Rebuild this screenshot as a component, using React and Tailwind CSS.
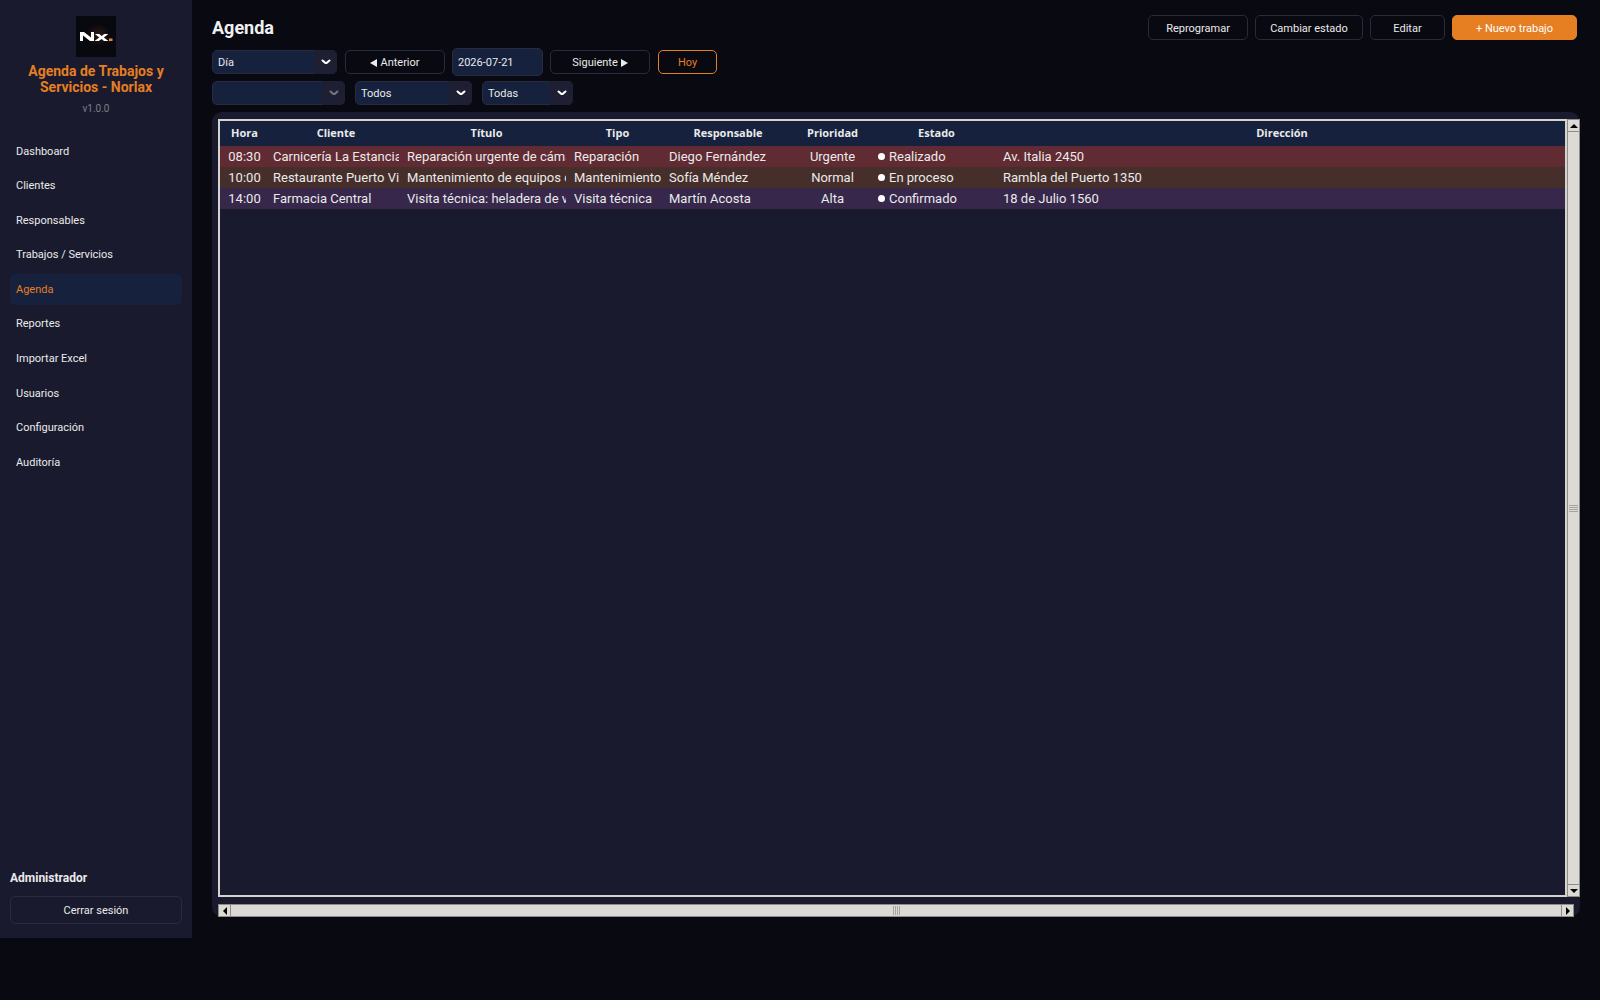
import React, { useState } from "react";

const menuItems = [
  "Dashboard",
  "Clientes",
  "Responsables",
  "Trabajos / Servicios",
  "Agenda",
  "Reportes",
  "Importar Excel",
  "Usuarios",
  "Configuración",
  "Auditoría",
];

const trabajos = [
  {
    hora: "08:30",
    cliente: "Carnicería La Estancia",
    titulo: "Reparación urgente de cámara",
    tipo: "Reparación",
    responsable: "Diego Fernández",
    prioridad: "Urgente",
    estado: "Realizado",
    direccion: "Av. Italia 2450",
    color: "bg-[#612b33]",
  },
  {
    hora: "10:00",
    cliente: "Restaurante Puerto Viejo",
    titulo: "Mantenimiento de equipos de cocina",
    tipo: "Mantenimiento",
    responsable: "Sofía Méndez",
    prioridad: "Normal",
    estado: "En proceso",
    direccion: "Rambla del Puerto 1350",
    color: "bg-[#462f2b]",
  },
  {
    hora: "14:00",
    cliente: "Farmacia Central",
    titulo: "Visita técnica: heladera de vacunas",
    tipo: "Visita técnica",
    responsable: "Martín Acosta",
    prioridad: "Alta",
    estado: "Confirmado",
    direccion: "18 de Julio 1560",
    color: "bg-[#36274b]",
  },
];

function Logo() {
  return (
    <div className="w-10 h-[41px] bg-[#08080f]">
      <svg width="40" height="41" viewBox="0 0 40 41">
        <defs>
          <radialGradient id="glow">
            <stop offset="0" stopColor="#2c1b14" />
            <stop offset="1" stopColor="#08080f" />
          </radialGradient>
        </defs>
        <ellipse cx="22" cy="19" rx="13" ry="11" fill="url(#glow)" />
        <path d="M4 25V16h4l7 5.500V16h3v9h-4l-7-5.500V25z" fill="#fff" />
        <path d="M19 18h4.300l2.400 2.100L28.200 18h4.100l-4.400 3.500L32.500 25h-4.500l-2.500-2.100L22.800 25h-4.300l4.800-3.500z" fill="#fff" />
        <path d="M33 22.500h3.500V25H33z" fill="#f08a24" />
      </svg>
    </div>
  );
}

function Combo({ label, options, width, disabled }) {
  return (
    <div className={`relative h-6 ${width}`}>
      <select
        aria-label={label}
        disabled={disabled}
        className="appearance-none block w-full h-full pt-[2px] pl-[5px] pr-7 rounded-[5px] border border-[#2a2a3e] bg-[#16213e] text-[11px] leading-4 text-[#eaeaea] outline-none"
      >
        {options.map((o) => (
          <option key={o}>{o}</option>
        ))}
      </select>
      <span
        className={`absolute right-0 top-0 h-full w-[23px] rounded-r-[5px] bg-[#1f1f33] flex items-center justify-center pointer-events-none ${
          disabled ? "text-[#777782]" : "text-white"
        }`}
      >
        <svg width="10" height="6" viewBox="0 0 10 6" fill="none">
          <path d="M1.500 1.500L4 3.600Q5 4.300 6 3.600L8.500 1.500" stroke="currentColor" strokeWidth="2" strokeLinecap="round" />
        </svg>
      </span>
    </div>
  );
}

function Button({ children, className }) {
  return (
    <button
      type="button"
      className={`flex items-center justify-center gap-[3px] pt-[2px] rounded-[5px] border text-[11px] leading-4 cursor-pointer ${className}`}
    >
      {children}
    </button>
  );
}

function ScrollArrow({ label, points, className }) {
  return (
    <button
      type="button"
      aria-label={label}
      className={`flex items-center justify-center shrink-0 bg-[#dcdad5] border-[#8f8d88] ${className}`}
    >
      <svg width="8" height="8" viewBox="0 0 8 8">
        <polygon points={points} fill="#000" />
      </svg>
    </button>
  );
}

function Sidebar({ active, setActive }) {
  return (
    <aside className="w-48 shrink-0 bg-[#1a1a2e] flex flex-col items-stretch px-[10px] pt-4 pb-[14px]">
      <div className="flex flex-col items-center">
        <Logo />
        <h2 className="mt-[6px] text-[14px] leading-4 font-bold text-center text-[#e67e22]">
          Agenda de Trabajos y
          <br />
          Servicios - Norlax
        </h2>
        <p className="mt-[6px] text-[10px] leading-4 text-[#7d7d88]">v1.0.0</p>
      </div>
      <nav className="mt-[19px] h-[342px] flex flex-col justify-between">
        {menuItems.map((item) => (
          <a
            key={item}
            href="#"
            onClick={(e) => {
              e.preventDefault();
              setActive(item);
            }}
            className={`flex items-center h-[31px] pt-px px-[6px] rounded-[5px] text-[11px] ${
              item === active ? "bg-[#16213e] text-[#e67e22]" : "text-[#eaeaea]"
            }`}
          >
            {item}
          </a>
        ))}
      </nav>
      <div className="mt-auto">
        <p className="mb-[10px] text-xs leading-4 font-bold text-[#eaeaea]">Administrador</p>
        <Button className="w-full h-7 border-[#2a2a3e] text-[#eaeaea]">Cerrar sesión</Button>
      </div>
    </aside>
  );
}

function AgendaTable() {
  return (
    <table className="w-full table-fixed border-collapse text-[#eaeaea]">
      <colgroup>
        <col className="w-[49px]" />
        <col className="w-[134px]" />
        <col className="w-[167px]" />
        <col className="w-[95px]" />
        <col className="w-[126px]" />
        <col className="w-[83px]" />
        <col className="w-[125px]" />
        <col />
      </colgroup>
      <thead>
        <tr className="h-[25px] bg-[#16213e] text-[11px] font-['Open_Sans',sans-serif]">
          <th>Hora</th>
          <th>Cliente</th>
          <th>Título</th>
          <th>Tipo</th>
          <th>Responsable</th>
          <th>Prioridad</th>
          <th>Estado</th>
          <th>Dirección</th>
        </tr>
      </thead>
      <tbody>
        {trabajos.map((t) => (
          <tr key={t.hora} className={`text-[13px] leading-[21px] ${t.color}`}>
            <td className="text-center">{t.hora}</td>
            <td className="px-1"><div className="overflow-hidden whitespace-nowrap">{t.cliente}</div></td>
            <td className="px-1"><div className="overflow-hidden whitespace-nowrap">{t.titulo}</div></td>
            <td className="px-1"><div className="overflow-hidden whitespace-nowrap">{t.tipo}</div></td>
            <td className="px-1"><div className="overflow-hidden whitespace-nowrap">{t.responsable}</div></td>
            <td className="text-center">{t.prioridad}</td>
            <td className="px-1">
              <div className="flex items-center gap-1">
                <span className="size-[7px] rounded-full bg-white" />
                {t.estado}
              </div>
            </td>
            <td className="px-1">{t.direccion}</td>
          </tr>
        ))}
      </tbody>
    </table>
  );
}

export default function App() {
  const [active, setActive] = useState("Agenda");
  const [fecha, setFecha] = useState("2026-07-21");

  return (
    <div className="h-screen flex bg-[#090911] pb-[62px] font-[Roboto,sans-serif]">
      <Sidebar active={active} setActive={setActive} />
      <main className="flex-1 min-w-0 flex flex-col px-5 pt-[15px] pb-[21px]">
        <div className="flex items-center justify-between pr-[3px]">
          <h1 className="text-lg leading-6 font-bold text-[#f0f0f0]">Agenda</h1>
          <div className="flex gap-[7px] text-[#eaeaea]">
            <Button className="w-[100px] h-[25px] border-[#2a2a3e]">Reprogramar</Button>
            <Button className="w-[108px] h-[25px] border-[#2a2a3e]">Cambiar estado</Button>
            <Button className="w-[75px] h-[25px] border-[#2a2a3e]">Editar</Button>
            <Button className="w-[125px] h-[25px] border-[#e67e22] bg-[#e67e22] text-white">+ Nuevo trabajo</Button>
          </div>
        </div>

        <div className="mt-2 flex items-center">
          <Combo label="Vista" options={["Día", "Semana", "Mes"]} width="w-[125px]" />
          <Button className="ml-2 w-[100px] h-6 border-[#2a2a3e] text-[#eaeaea]">
            <svg width="7" height="8" viewBox="0 0 7 8"><path d="M7 0v8L0 4z" fill="currentColor" /></svg>
            Anterior
          </Button>
          <input
            type="text"
            aria-label="Fecha"
            value={fecha}
            onChange={(e) => setFecha(e.target.value)}
            className="ml-[7px] w-[91px] h-7 px-[5px] rounded-[5px] border border-[#2a2a3e] bg-[#16213e] text-[11px] text-[#eaeaea] outline-none"
          />
          <Button className="ml-[7px] w-[100px] h-6 border-[#2a2a3e] text-[#eaeaea]">
            Siguiente
            <svg width="7" height="8" viewBox="0 0 7 8"><path d="M0 0v8l7-4z" fill="currentColor" /></svg>
          </Button>
          <Button className="ml-2 w-[59px] h-6 border-[#e67e22] text-[#e67e22]">Hoy</Button>
        </div>

        <div className="mt-[5px] flex gap-[10px]">
          <Combo label="Responsable" options={[""]} width="w-[133px]" disabled />
          <Combo label="Estado" options={["Todos", "Pendiente", "Confirmado", "En proceso", "Realizado"]} width="w-[117px]" />
          <Combo label="Prioridad" options={["Todas", "Normal", "Alta", "Urgente"]} width="w-[91px]" />
        </div>

        <div className="mt-[7px] flex-1 min-h-0 flex flex-col gap-[7px] rounded-[10px] bg-[#1a1a2e] pt-[7px] pl-[6px]">
          <div className="flex-1 min-h-0 flex">
            <div className="flex-1 min-w-0 border-2 border-[#d5d3ce] overflow-hidden">
              <AgendaTable />
            </div>
            <div className="w-[13px] flex flex-col border border-[#8f8d88] bg-[#dcdad5]">
              <ScrollArrow label="Subir" points="4,2 8,6 0,6" className="h-3 border-b" />
              <div className="flex-1 flex flex-col items-center justify-center gap-px">
                <span className="w-[9px] h-px bg-[#a5a39e]" />
                <span className="w-[9px] h-px bg-[#a5a39e]" />
                <span className="w-[9px] h-px bg-[#a5a39e]" />
                <span className="w-[9px] h-px bg-[#a5a39e]" />
              </div>
              <ScrollArrow label="Bajar" points="4,6 8,2 0,2" className="h-3 border-t" />
            </div>
          </div>
          <div className="h-[13px] mr-[6px] flex border border-[#8f8d88] bg-[#dcdad5]">
            <ScrollArrow label="Izquierda" points="2,4 6,0 6,8" className="w-3 border-r" />
            <div className="flex-1 flex items-center justify-center gap-px">
              <span className="w-px h-[9px] bg-[#a5a39e]" />
              <span className="w-px h-[9px] bg-[#a5a39e]" />
              <span className="w-px h-[9px] bg-[#a5a39e]" />
              <span className="w-px h-[9px] bg-[#a5a39e]" />
            </div>
            <ScrollArrow label="Derecha" points="6,4 2,0 2,8" className="w-3 border-l" />
          </div>
        </div>
      </main>
    </div>
  );
}
